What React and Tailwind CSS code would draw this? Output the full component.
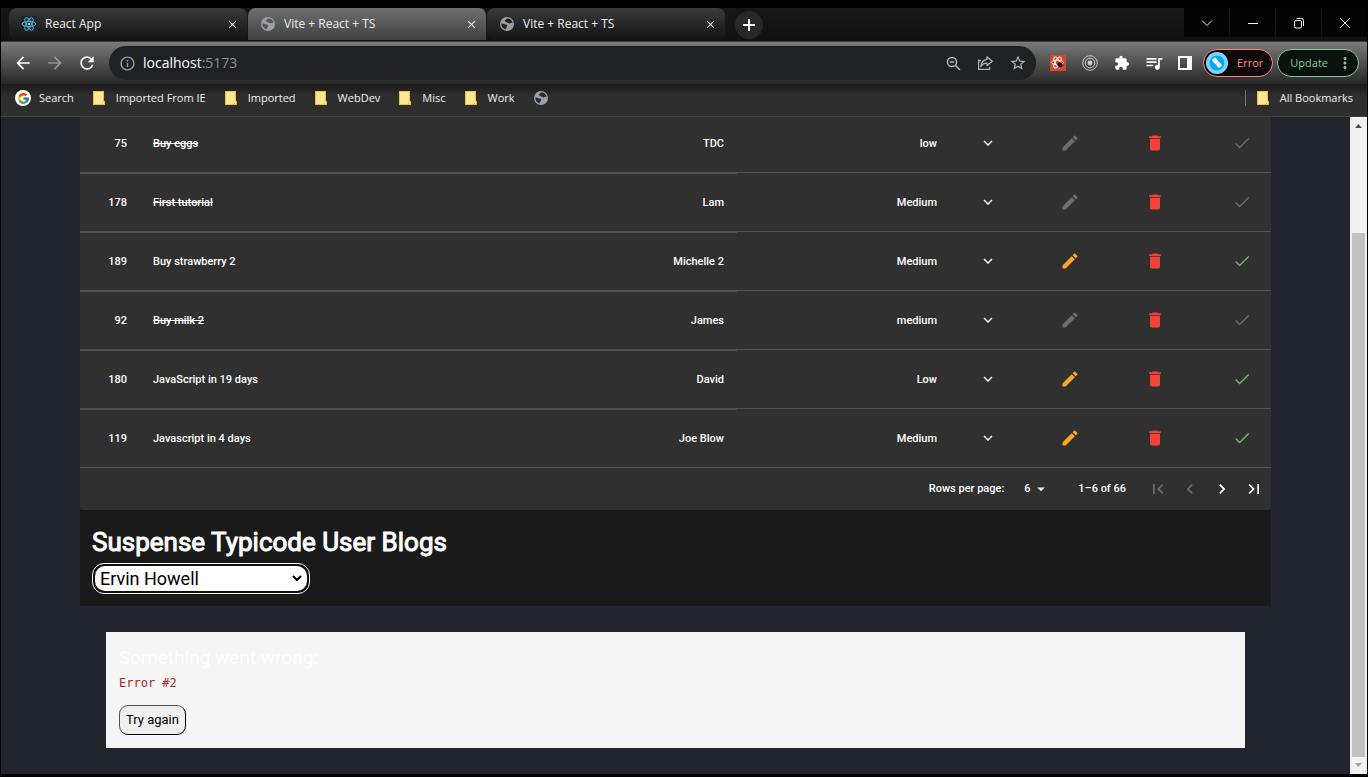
import React from "react";
import {
  MdArrowBack, MdArrowForward, MdRefresh, MdInfoOutline, MdStarBorder, MdExtension,
  MdQueueMusic, MdEdit, MdDelete, MdExpandMore, MdFirstPage, MdLastPage,
  MdChevronLeft, MdChevronRight, MdArrowDropDown, MdClose, MdMoreVert,
} from "react-icons/md";
import { FcGoogle } from "react-icons/fc";

const tabs = [
  { title: "React App", icon: "react", active: false },
  { title: "Vite + React + TS", icon: "globe", active: true },
  { title: "Vite + React + TS", icon: "globe", active: false },
];

const folders = ["Imported From IE", "Imported", "WebDev", "Misc", "Work"];

const todos = [
  { id: 75, title: "Buy eggs", user: "TDC", priority: "low", done: true },
  { id: 178, title: "First tutorial", user: "Lam", priority: "Medium", done: true },
  { id: 189, title: "Buy strawberry 2", user: "Michelle 2", priority: "Medium", done: false },
  { id: 92, title: "Buy milk 2", user: "James", priority: "medium", done: true },
  { id: 180, title: "JavaScript in 19 days", user: "David", priority: "Low", done: false },
  { id: 119, title: "Javascript in 4 days", user: "Joe Blow", priority: "Medium", done: false },
];

function ReactLogo() {
  return (
    <svg width="16" height="16" viewBox="0 0 16 16" fill="none" stroke="#4fb3cf" strokeWidth="1">
      <rect width="16" height="16" rx="1" fill="#20232a" stroke="none" />
      <ellipse cx="8" cy="8" rx="6.8" ry="2.6" />
      <ellipse cx="8" cy="8" rx="6.8" ry="2.6" transform="rotate(60 8 8)" />
      <ellipse cx="8" cy="8" rx="6.8" ry="2.6" transform="rotate(120 8 8)" />
      <circle cx="8" cy="8" r="1.3" fill="#61dafb" stroke="none" />
    </svg>
  );
}

function Globe({ land }) {
  return (
    <svg width="14" height="14" viewBox="0 0 14 14">
      <circle cx="7" cy="7" r="7" fill="#9aa0a6" />
      <path
        d="M7.6 1.4C6.2 1.6 6.4 2.6 5.4 2.9C4.6 3.2 4.7 4.2 5.5 4.4C6.6 4.6 6.5 5.6 7.6 5.6C8.6 5.6 8.8 6.6 9.8 6.5C10.8 6.3 11 5.2 12.6 6C12.3 3.4 10.2 1.4 7.6 1.4Z M1.3 6.6C2.6 6.5 3.6 6.8 4.5 7.3C5.4 7.8 6.7 7.4 7.2 8.2C7.6 9 6.6 9.5 6.6 10.2C6.5 11 5.6 11.2 5.5 12.4C3 11.8 1.2 9.6 1.3 6.6Z"
        fill={land}
      />
    </svg>
  );
}

function Folder() {
  return (
    <svg width="12" height="14" viewBox="0 0 12 14">
      <path d="M0 0H11V10H12V14H0Z" fill="#e9c443" />
      <path d="M1 1H10V10L9 13H1Z" fill="#ffe694" />
      <path d="M10 11H11V13H10Z" fill="#ffe694" />
    </svg>
  );
}

function Tab({ tab }) {
  return (
    <div
      className={
        "flex h-8 w-[239px] items-center rounded-lg border-r border-[#1a1a1a] bg-linear-to-b pr-2 " +
        (tab.icon === "react" ? "pl-3 " : "pl-[13px] ") +
        (tab.active ? "from-[#707070] to-[#414141] rounded-b-none" : "from-[#3b3b3b] to-[#131313]")
      }
    >
      {tab.icon === "react" ? <ReactLogo /> : <Globe land={tab.active ? "#55585a" : "#1f2021"} />}
      <span className={"flex-1 text-xs text-[#f0f0f0] " + (tab.icon === "react" ? "pl-2" : "pl-[9px]")}>{tab.title}</span>
      <button aria-label="Close tab" className="text-[#f2f2f2]">
        <MdClose size={13} />
      </button>
    </div>
  );
}

function WindowButton({ label, children }) {
  return (
    <button aria-label={label} className="flex h-[29px] w-[45px] items-center justify-center bg-[#030303]">
      <svg width="12" height="12" viewBox="0 0 12 12" fill="none" stroke="#f2f2f2" strokeWidth="1">{children}</svg>
    </button>
  );
}

function TabStrip() {
  return (
    <div className="flex h-[34px] border-b border-[#3c3c3c] bg-linear-to-b from-[#171717] to-[#111111] pl-2">
      {tabs.map((tab, i) => <Tab key={i} tab={tab} />)}
      <button aria-label="New tab" className="mt-[3px] ml-[9px] flex size-7 items-center justify-center rounded-full bg-[#282828]">
        <svg width="12" height="12" viewBox="0 0 12 12" stroke="#fff" strokeWidth="2"><path d="M6 0V12M0 6H12" /></svg>
      </button>
      <div className="ml-auto flex gap-px">
        <WindowButton label="Search tabs"><path d="M1 3.5L6 8.5L11 3.5" /></WindowButton>
        <WindowButton label="Minimize"><path d="M1 6.5H11" /></WindowButton>
        <WindowButton label="Restore">
          <rect x="1.5" y="3.5" width="7" height="7.5" rx="1.5" />
          <path d="M3.5 1.5H8.5Q10.5 1.5 10.5 3.5V9" />
        </WindowButton>
        <WindowButton label="Close"><path d="M1 1L11 11M11 1L1 11" /></WindowButton>
      </div>
    </div>
  );
}

function Toolbar() {
  return (
    <div className="flex h-[42px] items-center bg-linear-to-b from-[#7a7a7a] to-[#292929] pr-2 text-white">
      <div className="flex gap-3 pl-3">
        <button aria-label="Back"><MdArrowBack size={20} /></button>
        <button aria-label="Forward" className="text-[#949494]"><MdArrowForward size={20} /></button>
        <button aria-label="Reload"><MdRefresh size={20} /></button>
      </div>
      <div className="ml-3 flex h-[34px] flex-1 items-center rounded-full bg-[#202125] pr-[9px] pl-[10px] text-[#b5b5b8]">
        <MdInfoOutline size={17} className="text-[#9a9ca0]" />
        <p className="flex-1 pl-[7px] text-sm text-[#8e9094]"><span className="text-white">localhost</span>:5173</p>
        <div className="flex items-center gap-[15px]">
          <button aria-label="Zoom">
            <svg width="17" height="17" viewBox="0 0 17 17" fill="none" stroke="currentColor" strokeWidth="1.5">
              <circle cx="7" cy="7" r="4.6" />
              <path d="M4.8 7H9.2M10.4 10.4L15 15" />
            </svg>
          </button>
          <button aria-label="Share">
            <svg width="17" height="16" viewBox="0 0 17 16" fill="none" stroke="currentColor" strokeWidth="1.3">
              <path d="M4 5.5H1.6V14.4H12.6V12" />
              <path d="M10 1.8L15.3 6.3L10 10.6V8.2C7 8.2 5.2 9.2 3.8 11.6C4.2 7.6 6.4 4.7 10 4.3Z" strokeLinejoin="round" />
            </svg>
          </button>
          <button aria-label="Bookmark"><MdStarBorder size={18} /></button>
        </div>
      </div>
      <div className="flex items-center gap-4 pr-[11px] pl-[14px]">
        <svg width="16" height="16" viewBox="0 0 16 16" fill="none" stroke="#fff" strokeWidth="1">
          <rect width="16" height="16" fill="#d9432f" stroke="none" />
          <ellipse cx="7.5" cy="7.5" rx="6" ry="2.3" />
          <ellipse cx="7.5" cy="7.5" rx="6" ry="2.3" transform="rotate(60 7.5 7.5)" />
          <ellipse cx="7.5" cy="7.5" rx="6" ry="2.3" transform="rotate(120 7.5 7.5)" />
          <ellipse cx="10" cy="10" rx="2" ry="2.8" fill="#1c0d0b" stroke="none" transform="rotate(-40 10 10)" />
          <path d="M6.5 10H13.5M8 13L13 7M10 6.5V13.5" stroke="#1c0d0b" strokeWidth=".7" />
        </svg>
        <svg width="16" height="16" viewBox="0 0 16 16" fill="none" stroke="#c6c6c6">
          <circle cx="8" cy="8" r="7.3" strokeWidth="1" />
          <circle cx="8" cy="8" r="4.8" strokeWidth="1" />
          <circle cx="8" cy="8" r="2.4" fill="#d0d0d0" stroke="none" />
        </svg>
        <MdExtension size={16} />
        <MdQueueMusic size={20} className="-mx-0.5" />
        <svg width="14" height="14" viewBox="0 0 14 14"><path d="M0 0H14V14H0ZM2 2V12H9V2Z" fill="#fff" fillRule="evenodd" /></svg>
      </div>
      <button className="flex h-7 items-center rounded-full border border-[#f28b82] bg-[#120a0a] pr-[9px] pl-0.5 text-[11px] text-[#f28b82]">
        <svg width="22" height="22" viewBox="0 0 22 22">
          <circle cx="11" cy="11" r="11" fill="#7fd4ff" />
          <circle cx="11" cy="11" r="7.5" fill="#03a9f4" />
          <rect x="7" y="6" width="4.5" height="5.5" rx="1.2" fill="#fff" transform="rotate(-40 9.2 8.8)" />
          <rect x="10.5" y="10" width="4.5" height="5.5" rx="1.2" fill="#e4f5fe" transform="rotate(-40 12.7 12.7)" />
        </svg>
        <span className="pl-[9px]">Error</span>
      </button>
      <button className="ml-1 flex h-7 items-center rounded-full border border-[#81c995] bg-[#0b120d] pr-1 pl-3 text-[11px] text-[#81c995]">
        Update
        <MdMoreVert size={18} className="ml-2" />
      </button>
    </div>
  );
}

function Bookmarks() {
  return (
    <nav className="flex h-[33px] items-center border-b border-[#414141] bg-linear-to-b from-[#1b1b1b] to-[#2e2e2e] to-40% pr-[14px] pb-1 pl-[14px] text-[11px] text-[#f0f0f0]">
      <a href="#search" className="flex items-center gap-2">
        <span className="flex size-4 items-center justify-center rounded-full bg-white"><FcGoogle size={13} /></span>
        Search
      </a>
      {folders.map((name) => (
        <button key={name} className="ml-[19px] flex items-center gap-[11px]"><Folder />{name}</button>
      ))}
      <a href="#site" aria-label="Site" className="ml-[19px]"><Globe land="#2c2c2c" /></a>
      <button className="ml-auto flex items-center gap-[11px]">
        <span className="h-4 w-px bg-[#757575]" />
        <Folder />
        All Bookmarks
      </button>
    </nav>
  );
}

function TodoRow({ todo, last }) {
  const thin = "border-b border-[#515151] ";
  const thick = (last ? thin : "border-b-2 border-[#515151] ") + "pt-0.5 ";
  const action = thin + "flex h-[58px] items-center justify-end pb-0.5 ";
  return (
    <tr className={last ? "h-[58px]" : "h-[59px]"}>
      <td className={thick + "pr-[13px] text-right"}>{todo.id}</td>
      <td className={thick + "pl-[13px] " + (todo.done ? "line-through" : "")}>{todo.title}</td>
      <td className={thick + "pr-[13px] text-right"}>{todo.user}</td>
      <td className="p-0 align-top">
        <div className={action + "pr-[18px]"}>
          <select
            aria-label={"Priority of " + todo.title}
            defaultValue={todo.priority}
            className="w-32 appearance-none bg-transparent pt-1 pr-[61px] text-right [text-align-last:right]"
          >
            <option>{todo.priority}</option>
          </select>
          <MdExpandMore size={18} className="pointer-events-none -ml-[19px]" />
        </div>
      </td>
      <td className="p-0 align-top">
        <div className={action + "pr-5"}>
          <button aria-label="Edit" disabled={todo.done} className={todo.done ? "text-[#6e6e6e]" : "text-[#ffa726]"}><MdEdit size={20} /></button>
        </div>
      </td>
      <td className="p-0 align-top">
        <div className={action + "pr-5"}>
          <button aria-label="Delete" className="text-[#f44336]"><MdDelete size={20} /></button>
        </div>
      </td>
      <td className="p-0 align-top">
        <div className={action + "pr-5"}>
          <button aria-label="Complete" disabled={todo.done} className={todo.done ? "text-[#6e6e6e]" : "text-[#66bb6a]"}>
            <svg width="18" height="18" viewBox="0 0 24 24" fill="currentColor"><path d="M8.8 16.6L4.2 12L2.8 13.4L8.8 19.4L21.6 6.6L20.2 5.2Z" /></svg>
          </button>
        </div>
      </td>
    </tr>
  );
}

function TodoTable() {
  return (
    <section className="overflow-hidden rounded-b bg-[#303030] text-[11px] font-medium text-white">
      <div className="-mt-[2px]">
        <table className="w-full table-fixed border-separate border-spacing-0">
          <colgroup>
            <col className="w-[60px]" />
            <col />
            <col className="w-[200px]" />
            <col className="w-[278px]" />
            <col className="w-[85px]" />
            <col className="w-[85px]" />
            <col className="w-[86px]" />
          </colgroup>
          <tbody>
            {todos.map((todo, i) => <TodoRow key={todo.id} todo={todo} last={i === todos.length - 1} />)}
          </tbody>
        </table>
      </div>
      <div className="flex h-[42px] items-center justify-end pr-px">
        <label htmlFor="rows">Rows per page:</label>
        <div className="ml-5 flex items-center">
          <select id="rows" defaultValue="6" className="w-[26px] appearance-none bg-transparent pr-3"><option>6</option></select>
          <MdArrowDropDown size={18} className="pointer-events-none -ml-[18px]" />
        </div>
        <span className="ml-7">1–6 of 66</span>
        <div className="ml-4 flex">
          <button aria-label="First page" disabled className="flex size-8 items-center justify-center text-[#6e6e6e]"><MdFirstPage size={20} /></button>
          <button aria-label="Previous page" disabled className="flex size-8 items-center justify-center text-[#6e6e6e]"><MdChevronLeft size={20} /></button>
          <button aria-label="Next page" className="flex size-8 items-center justify-center"><MdChevronRight size={20} /></button>
          <button aria-label="Last page" className="flex size-8 items-center justify-center"><MdLastPage size={20} /></button>
        </div>
      </div>
    </section>
  );
}

function Blogs() {
  return (
    <section className="bg-[#1a1a1a] px-3 pt-4 pb-3">
      <h2 className="text-[26px] leading-8 font-normal text-white [-webkit-text-stroke:1px_#fff]">
        <label htmlFor="user">Suspense Typicode User Blogs</label>
      </h2>
      <div className="mt-[5px] flex w-[218px] items-center rounded-xl border border-white bg-[#101010] p-0.5">
        <div className="flex h-[25px] w-full items-center rounded-[10px] bg-white text-black">
          <select id="user" defaultValue="Ervin Howell" className="w-full appearance-none bg-transparent pl-[5px] text-lg leading-6 outline-none">
            <option>Ervin Howell</option>
          </select>
          <svg width="10" height="7" viewBox="0 0 10 7" fill="none" stroke="#000" strokeWidth="2" className="mr-[5px] shrink-0"><path d="M1 1L5 5L9 1" /></svg>
        </div>
      </div>
    </section>
  );
}

function ErrorBox() {
  return (
    <section role="alert" className="mx-[26px] mt-[26px] bg-[#f5f5f5] px-[13px] pt-[14px] pb-[13px]">
      <p className="text-[19px] leading-6 text-white">Something went wrong:</p>
      <pre className="mt-1 font-['DejaVu_Sans_Mono',monospace] text-xs leading-[18px] text-[#b22222]">Error #2</pre>
      <button className="mt-[13px] h-[30px] rounded-[9px] border border-black border-t-[#555] border-l-[#555] bg-[#efefef] px-1.5 text-[13px] text-black">Try again</button>
    </section>
  );
}

function Scrollbar() {
  return (
    <div aria-hidden="true" className="flex w-[17px] flex-col items-center bg-[#f1f1f1]">
      <svg width="17" height="17" viewBox="0 0 17 17" className="mb-[99px]"><path d="M5 11L8.5 7L12 11Z" fill="#505050" /></svg>
      <div className="w-[13px] flex-1 bg-[#c1c1c1]" />
      <svg width="17" height="17" viewBox="0 0 17 17"><path d="M5 6L8.5 10L12 6Z" fill="#a3a3a3" /></svg>
    </div>
  );
}

export default function App() {
  return (
    <div className="flex min-h-screen flex-col border-x border-t-8 border-b-3 border-black bg-[#21252d]">
      <header className="font-['Open_Sans','Noto_Sans',sans-serif]">
        <TabStrip />
        <Toolbar />
        <Bookmarks />
      </header>
      <div className="flex flex-1 font-['Roboto',sans-serif]">
        <main className="flex-1 px-[79px]">
          <TodoTable />
          <Blogs />
          <ErrorBox />
        </main>
        <Scrollbar />
      </div>
    </div>
  );
}
